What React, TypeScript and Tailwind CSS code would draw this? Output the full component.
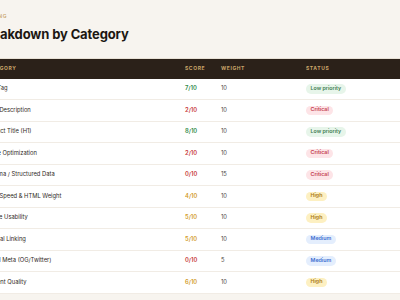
import React from 'react';

type Status = 'Low priority' | 'Critical' | 'High' | 'Medium';

interface Row {
  category: string;
  score: number;
  weight: number;
  status: Status;
}

const rows: Row[] = [
  { category: 'Title Tag', score: 7, weight: 10, status: 'Low priority' },
  { category: 'Meta Description', score: 2, weight: 10, status: 'Critical' },
  { category: 'Product Title (H1)', score: 8, weight: 10, status: 'Low priority' },
  { category: 'Image Optimization', score: 2, weight: 10, status: 'Critical' },
  { category: 'Schema / Structured Data', score: 0, weight: 15, status: 'Critical' },
  { category: 'Page Speed & HTML Weight', score: 4, weight: 10, status: 'High' },
  { category: 'Mobile Usability', score: 5, weight: 10, status: 'High' },
  { category: 'Internal Linking', score: 5, weight: 10, status: 'Medium' },
  { category: 'Social Meta (OG/Twitter)', score: 0, weight: 5, status: 'Medium' },
  { category: 'Content Quality', score: 6, weight: 10, status: 'High' },
];

const badgeClass: Record<Status, string> = {
  'Low priority': 'bg-[#e7f5ea] text-[#3f7d52]',
  Critical: 'bg-[#fde4e7] text-[#c4404f]',
  High: 'bg-[#fdf0c2] text-[#a9790f]',
  Medium: 'bg-[#e4eefd] text-[#3e6fd1]',
};

function scoreClass(score: number) {
  if (score >= 7) return 'text-[#2f8a4a]';
  if (score >= 4) return 'text-[#d29b2b]';
  return 'text-[#c73a3a]';
}

const cols = 'grid grid-cols-[201px_36px_85px_1fr] items-center pl-[5px]';

export default function App() {
  return (
    <div className="w-[400px] h-[300px] overflow-hidden bg-[#f7f4ef] flex justify-center font-['Inter',sans-serif]">
      <div className="w-[442px] shrink-0 pt-[13px]">
        <div className="text-[5px] leading-[6px] font-semibold tracking-[0.15em] text-[#c9a46a] uppercase">
          Scoring
        </div>
        <h1 className="mt-[7px] text-[13px] leading-[16px] font-bold tracking-[-0.01em] text-[#1c1712]">
          Breakdown by Category
        </h1>

        <div className="mt-[16px] border-t border-[#e8e1d6] bg-white">
          <div className={`${cols} h-[19.5px] bg-[#2b2119] text-[5px] font-bold tracking-[0.12em] text-[#c9a56a] uppercase`}>
            <span>Category</span>
            <span>Score</span>
            <span>Weight</span>
            <span>Status</span>
          </div>
          {rows.map((row) => (
            <div
              key={row.category}
              className={`${cols} h-[21.5px] border-b border-[#f1ece5] text-[5.8px]`}
            >
              <span className="text-[#2f2924]">{row.category}</span>
              <span className={`font-semibold ${scoreClass(row.score)}`}>{row.score}/10</span>
              <span className="text-[#4a4540]">{row.weight}</span>
              <span>
                <span
                  className={`inline-flex items-center h-[9.5px] px-[4.5px] rounded-full text-[5.3px] font-semibold ${badgeClass[row.status]}`}
                >
                  {row.status}
                </span>
              </span>
            </div>
          ))}
        </div>
      </div>
    </div>
  );
}
